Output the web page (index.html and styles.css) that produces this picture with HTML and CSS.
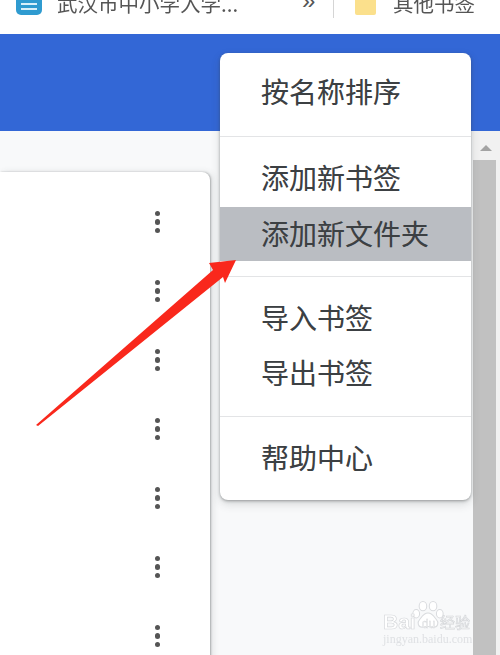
FILE: index.html
```html
<!DOCTYPE html>
<html lang="zh">
<head>
<meta charset="utf-8">
<title>书签管理器</title>
<link rel="stylesheet" href="styles.css">
</head>
<body>
<div class="bookmarks-bar">
  <div class="favicon"><span class="favicon-line"></span><span class="favicon-line"></span></div>
  <span class="bar-title">武汉市中小学入学...</span>
  <span class="more">»</span>
  <span class="bar-divider"></span>
  <div class="folder"></div>
  <span class="bar-other">其他书签</span>
</div>
<header class="header"></header>
<main class="main">
  <div class="content">
    <div class="card">
      <div class="row"><span class="dots"><i></i><i></i><i></i></span></div>
      <div class="row"><span class="dots"><i></i><i></i><i></i></span></div>
      <div class="row"><span class="dots"><i></i><i></i><i></i></span></div>
      <div class="row"><span class="dots"><i></i><i></i><i></i></span></div>
      <div class="row"><span class="dots"><i></i><i></i><i></i></span></div>
      <div class="row"><span class="dots"><i></i><i></i><i></i></span></div>
      <div class="row"><span class="dots"><i></i><i></i><i></i></span></div>
    </div>
  </div>
  <div class="scrollbar">
    <div class="scroll-btn"><span class="scroll-arrow"></span></div>
    <div class="scroll-thumb"></div>
  </div>
</main>

<div class="menu">
  <div class="menu-section first"><div class="menu-item">按名称排序</div></div>
  <div class="menu-section">
    <div class="menu-item">添加新书签</div>
    <div class="menu-item active">添加新文件夹</div>
  </div>
  <div class="menu-section">
    <div class="menu-item">导入书签</div>
    <div class="menu-item">导出书签</div>
  </div>
  <div class="menu-section"><div class="menu-item">帮助中心</div></div>
</div>

<svg class="annotation" width="500" height="655" viewBox="0 0 500 655" aria-hidden="true">
  <polygon class="arrow" points="36,425 213,270 209,263 236,260 225,283 223,277 38,426"/>
</svg>

<div class="watermark">
  <svg class="paw" width="32" height="34" viewBox="0 0 38 40" aria-hidden="true">
    <g class="paw-shape">
      <ellipse cx="13" cy="6" rx="4.5" ry="5.5"/>
      <ellipse cx="25" cy="6" rx="4.5" ry="5.5"/>
      <ellipse cx="5" cy="15" rx="4" ry="5"/>
      <ellipse cx="33" cy="15" rx="4" ry="5"/>
      <path d="M19 14c5 0 7 4 10 8 3 3 2 9-3 9-3 0-5-1-7-1s-4 1-7 1c-5 0-6-6-3-9 3-4 5-8 10-8z"/>
    </g>
  </svg>
  <div class="wm-line"><span class="wm-latin">Bai</span><span class="wm-du">du</span><span class="wm-cjk">经验</span></div>
  <div class="wm-url">jingyan.baidu.com</div>
</div>
</body>
</html>
```

FILE: styles.css
```css
* { box-sizing: border-box; }

html, body {
  margin: 0;
  padding: 0;
  height: 655px;
  overflow: hidden;
}

body {
  position: relative;
  display: flex;
  flex-direction: column;
  background: #f8f9fa;
  font-family: "Noto Sans CJK SC", "Liberation Sans", sans-serif;
}

.bookmarks-bar {
  height: 34px;
  flex: none;
  background: #fff;
  display: flex;
  align-items: flex-end;
  padding: 0 0 19px 16px;
  overflow: hidden;
  color: #555;
  font-size: 20.5px;
  line-height: 30px;
}

.favicon {
  flex: none;
  width: 26px;
  height: 26px;
  border-radius: 5px;
  background: #2f9bd0;
  display: flex;
  flex-direction: column;
  justify-content: flex-end;
  gap: 3px;
  padding: 0 5px 5px;
}

.favicon-line {
  height: 2px;
  background: #d8f0fa;
}

.bar-title {
  margin-left: 15px;
  width: 246px;
  flex: none;
  white-space: nowrap;
  position: relative;
  top: 3px;
  filter: blur(0.4px);
}

.more {
  flex: none;
  width: 30px;
  font-family: "Liberation Sans", sans-serif;
  font-size: 24px;
  position: relative;
  top: 1px;
  left: -1px;
}

.bar-divider {
  flex: none;
  width: 1px;
  height: 18px;
  margin-bottom: -3px;
  background: #d5d5d5;
}

.folder {
  flex: none;
  width: 21px;
  height: 24px;
  margin: 0 17px 0 21px;
  background: #fbe08c;
  border-radius: 2px;
}

.bar-other {
  flex: none;
  white-space: nowrap;
  position: relative;
  top: 3px;
  filter: blur(0.4px);
}

.header {
  height: 97px;
  flex: none;
  background: #3367d6;
}

.main {
  flex: 1;
  display: flex;
  min-height: 0;
}

.content {
  flex: 1;
  padding-top: 41px;
  overflow: hidden;
}

.card {
  width: 210px;
  background: #fff;
  border-radius: 0 8px 0 0;
  box-shadow: 1px 0 2px rgba(60, 64, 67, 0.35), 3px 0 6px rgba(60, 64, 67, 0.12);
  padding-top: 15.5px;
  min-height: 500px;
}

.row {
  height: 69px;
  display: flex;
  justify-content: flex-end;
  align-items: center;
  padding-right: 50px;
}

.dots {
  display: flex;
  flex-direction: column;
  gap: 3.2px;
  filter: blur(0.3px);
}

.dots i {
  display: block;
  width: 5.5px;
  height: 5.5px;
  border-radius: 50%;
  background: #555;
}

.scrollbar {
  width: 27px;
  flex: none;
  display: flex;
  flex-direction: column;
  background: #f1f1f1;
}

.scroll-btn {
  height: 29px;
  flex: none;
  display: flex;
  justify-content: center;
  align-items: center;
  padding: 5px 2px 0 0;
}

.scroll-arrow {
  width: 0;
  height: 0;
  border-left: 6px solid transparent;
  border-right: 6px solid transparent;
  border-bottom: 6px solid #a3a3a3;
}

.scroll-thumb {
  flex: 1;
  width: 23px;
  background: #c1c1c1;
}

.menu {
  position: absolute;
  left: 220px;
  top: 53px;
  width: 251px;
  height: 447px;
  background: #fff;
  border-radius: 8px;
  box-shadow: 0 1px 3px rgba(60, 64, 67, 0.45), 0 4px 10px rgba(60, 64, 67, 0.18);
  color: #3c4043;
  font-size: 28px;
  overflow: hidden;
}

.menu-section {
  padding: 14px 0 15px;
  border-bottom: 1px solid #e3e4e6;
}

.menu-section:last-child {
  border-bottom: 0;
}

.menu-section.first {
  padding: 11px 0 17px;
}

.menu-item {
  height: 55px;
  line-height: 53px;
  padding-left: 41px;
  white-space: nowrap;
  text-shadow: 0 0 0.6px rgba(60, 64, 67, 0.4);
}

.menu-section.first .menu-item {
  line-height: 55px;
}

.menu-item.active {
  height: 54px;
  line-height: 52px;
  margin-top: 1px;
  background: #babdc2;
}

.annotation {
  position: absolute;
  left: 0;
  top: 0;
  pointer-events: none;
}

.arrow {
  fill: #f9281c;
}

.watermark {
  position: absolute;
  left: 383px;
  top: 601px;
  width: 90px;
  height: 44px;
  filter: blur(0.35px);
}

.paw {
  position: absolute;
  left: 29px;
  top: 0;
}

.paw-shape {
  fill: #fff;
  stroke: #d9dbde;
  stroke-width: 1.2;
}

.wm-line {
  position: absolute;
  left: 0;
  top: 11px;
  display: flex;
  align-items: center;
  white-space: nowrap;
  color: #fff;
  -webkit-text-stroke: 0.7px #d6d8db;
}

.wm-latin {
  font-family: "Liberation Sans", sans-serif;
  font-size: 21px;
  font-weight: 700;
  line-height: 20px;
  width: 34px;
}

.wm-du {
  font-family: "Liberation Sans", sans-serif;
  font-size: 12px;
  line-height: 14px;
  margin-top: 3px;
  width: 23px;
  text-align: center;
  position: relative;
  -webkit-text-stroke: 0.5px #d6d8db;
}

.wm-cjk {
  font-size: 15px;
  line-height: 20px;
}

.wm-url {
  position: absolute;
  left: 0;
  top: 32px;
  font-family: "Liberation Serif", serif;
  font-size: 12px;
  line-height: 12px;
  color: #dfe1e4;
  white-space: nowrap;
}
```
